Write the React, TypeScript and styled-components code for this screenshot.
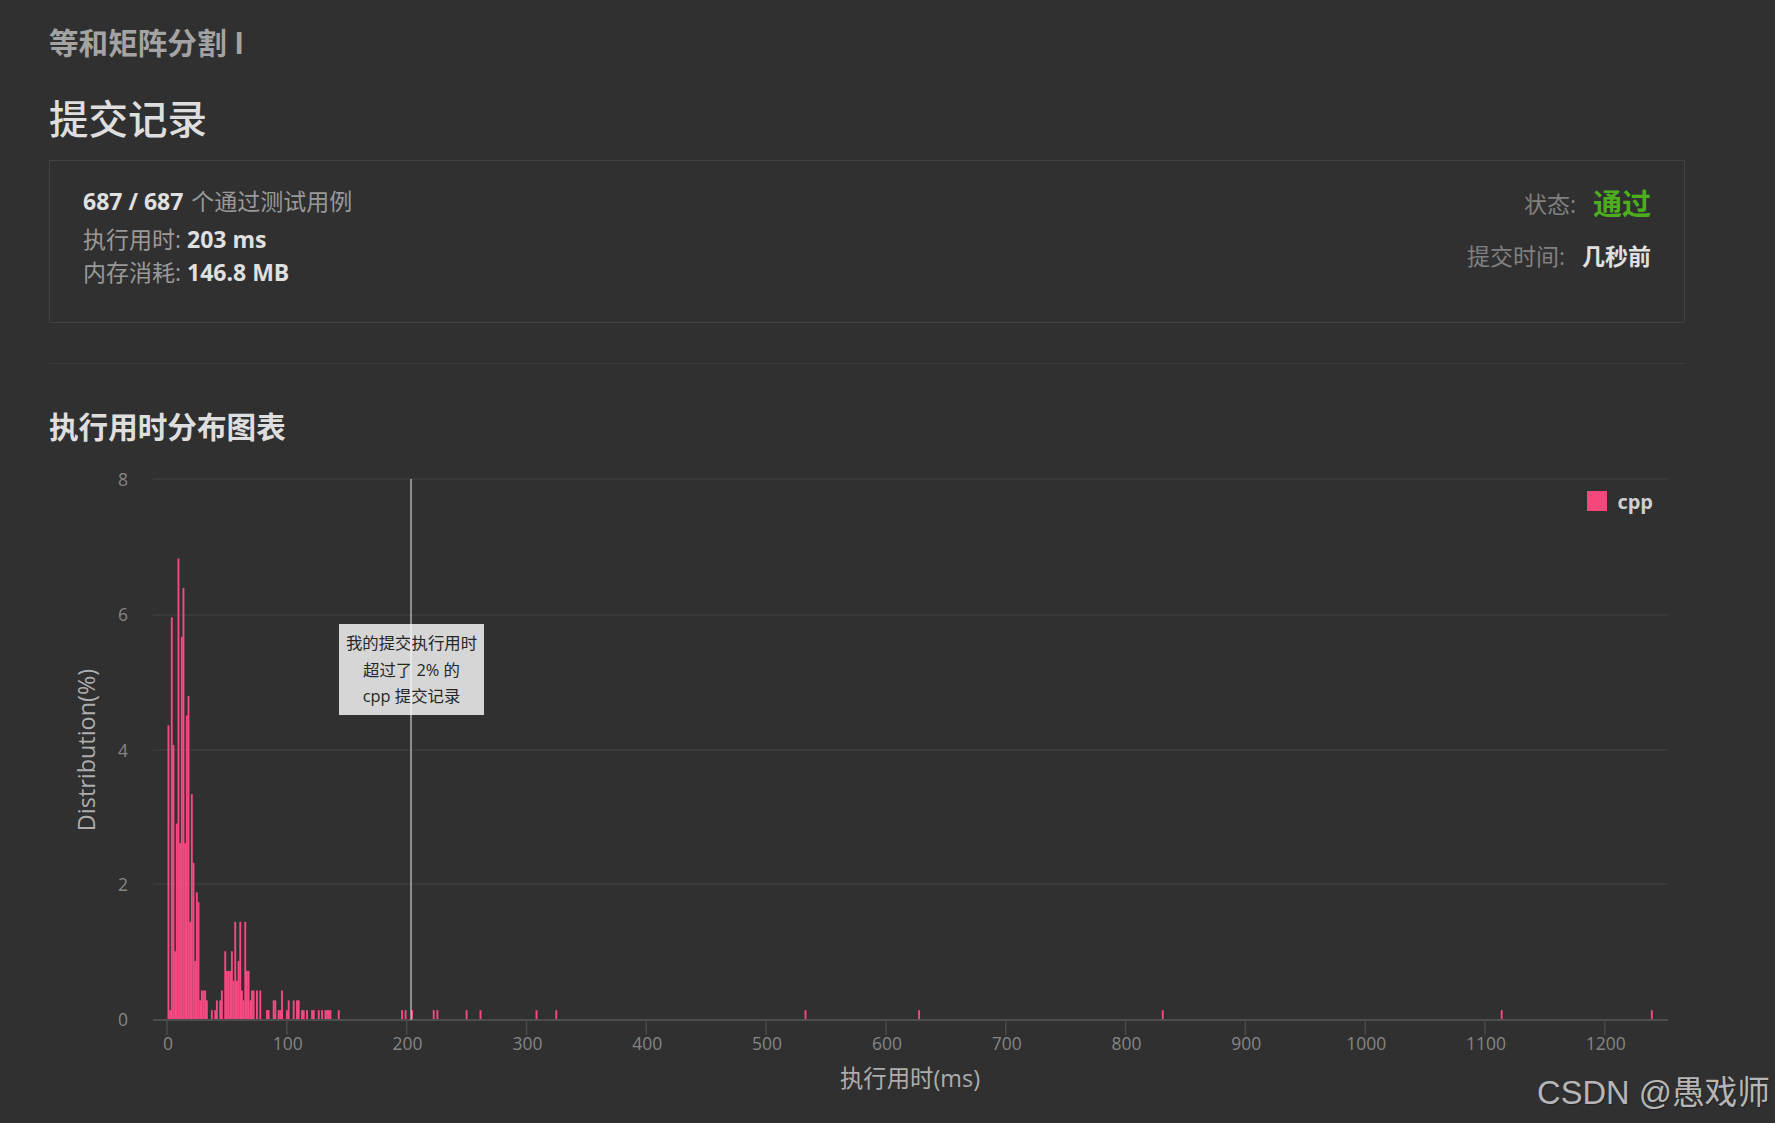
import React from 'react';
import styled, { createGlobalStyle } from 'styled-components';

const FONT = `"Open Sans", "Noto Sans CJK SC", sans-serif`;

const GlobalStyle = createGlobalStyle`
  html, body {
    margin: 0;
    padding: 0;
    background: #303030;
  }
`;

const Page = styled.div`
  position: relative;
  box-sizing: border-box;
  width: 1775px;
  height: 1123px;
  overflow: hidden;
  padding: 23px 90px 0 49px;
  background: #303030;
  font-family: ${FONT};
`;

const ProblemTitle = styled.div`
  height: 40px;
  line-height: 40px;
  font-size: 29.6px;
  font-weight: 700;
  color: #a3a3a3;
`;

const Heading = styled.h1`
  margin: 31px 0 16px;
  height: 50px;
  line-height: 50px;
  font-size: 39.5px;
  font-weight: 500;
  color: #dedede;
`;

const ResultCard = styled.div`
  box-sizing: border-box;
  height: 163px;
  padding: 23px 33px 0 33px;
  border: 1px solid #414141;
  display: flex;
  justify-content: space-between;
`;

const Stats = styled.div`
  margin-top: 1px;
  display: flex;
  flex-direction: column;
`;

const StatRow = styled.div<{ $mt?: number }>`
  height: 33px;
  line-height: 33px;
  margin-top: ${(p) => p.$mt || 0}px;
  font-size: 23px;
  color: #999;
  white-space: pre;
`;

const Strong = styled.strong<{ $mr?: number }>`
  margin-right: ${(p) => p.$mr || 0}px;
  font-weight: 700;
  color: #e0e0e0;
`;

const Meta = styled.div`
  display: flex;
  flex-direction: column;
  align-items: flex-end;
  gap: 18px;
`;

const MetaRow = styled.div`
  display: flex;
  align-items: center;
  gap: 17px;
  height: 35px;
  font-size: 23px;
  color: #808080;
`;

const MetaLabel = styled.span<{ $dy?: number }>`
  transform: translateY(${(p) => p.$dy || 0}px);
`;

const PassText = styled.span`
  font-size: 29px;
  font-weight: 700;
  color: #4cae1f;
`;

const Divider = styled.hr`
  margin: 40px 0 43px;
  border: 0;
  height: 1px;
  background: #3b3b3b;
`;

const SectionTitle = styled.h2`
  margin: 0;
  height: 40px;
  line-height: 40px;
  font-size: 29.6px;
  font-weight: 700;
  color: #dedede;
`;

const ChartWrap = styled.div`
  position: relative;
  width: 1635px;
  height: 676px;
`;

const ChartSvg = styled.svg`
  display: block;
  width: 1635px;
  height: 676px;
`;

const TickLabel = styled.text`
  font-family: ${FONT};
  font-size: 17.5px;
  fill: #858585;
`;

const AxisName = styled.text`
  font-family: ${FONT};
  font-size: 23.4px;
  fill: #adadad;
`;

const Legend = styled.div`
  position: absolute;
  top: 44px;
  right: 31px;
  display: flex;
  align-items: center;
  gap: 10px;
  height: 20px;
  font-size: 20px;
  font-weight: 700;
  color: #cfcfcf;
`;

const LegendSwatch = styled.span`
  width: 20px;
  height: 20px;
  background: #f4487d;
`;

const Tooltip = styled.div`
  position: absolute;
  left: 290px;
  top: 177px;
  box-sizing: border-box;
  width: 145px;
  height: 91px;
  padding-top: 6px;
  background: #d6d6d6;
  color: #262626;
  font-size: 16.4px;
  line-height: 26.6px;
  text-align: center;
`;

const CursorLine = styled.div`
  position: absolute;
  left: 361px;
  top: 32px;
  width: 2px;
  height: 541px;
  background: rgba(255, 255, 255, 0.45);
`;

const Watermark = styled.div`
  position: absolute;
  right: 5px;
  top: 1072px;
  line-height: 42px;
  font-family: "Liberation Sans", "Noto Sans CJK SC", sans-serif;
  font-size: 32.7px;
  color: #b6b6b6;
  text-shadow: 1px 1px 1px rgba(0, 0, 0, 0.3);
  white-space: nowrap;
`;

const BASE_Y = 1020;
const UNIT = 9.82;
const BAR_W = 1.67;

// histogram levels by bin index, read off the reference
const DENSE: Record<number, number> = {
  0: 30, 1: 1, 2: 41, 3: 28, 4: 7, 5: 20, 6: 47, 7: 18, 8: 39, 9: 44, 10: 18, 11: 31, 12: 33,
  13: 10, 14: 23, 15: 16, 16: 6, 17: 13, 18: 12, 19: 2, 20: 3, 21: 3, 22: 3, 23: 2,
  26: 1, 28: 1, 29: 2, 31: 2, 32: 3, 34: 7, 35: 5, 36: 5, 37: 5, 38: 7, 39: 4, 40: 10, 41: 4,
  42: 6, 43: 10, 44: 3, 45: 2, 46: 10, 47: 5, 48: 5, 49: 2, 50: 3, 51: 3, 53: 3, 55: 3,
  59: 1, 60: 1, 63: 2, 64: 2, 66: 1, 67: 1, 68: 3, 71: 1, 72: 2, 75: 2, 77: 2, 78: 2,
  80: 1, 81: 1, 83: 1, 86: 1, 87: 1, 90: 1, 92: 1, 94: 1, 95: 1, 96: 1, 97: 1, 102: 1,
};

const SPARSE_X = [402, 405.5, 412, 433.6, 437.3, 466.5, 480.4, 536.4, 556.2, 805.4, 919, 1162.6, 1501.6, 1651.7];

const bars = [
  ...Object.entries(DENSE).map(([k, level]) => ({ x: 167.5 + Number(k) * BAR_W, level })),
  ...SPARSE_X.map((x) => ({ x: x - BAR_W / 2, level: 1 })),
];

const X_TICKS = [0, 100, 200, 300, 400, 500, 600, 700, 800, 900, 1000, 1100, 1200];
const GRID_Y = [479, 615, 750, 884];
const Y_LABELS = [
  { label: '8', y: 486 },
  { label: '6', y: 621 },
  { label: '4', y: 757 },
  { label: '2', y: 891 },
  { label: '0', y: 1026 },
];

const xOf = (v: number) => 167 + v * 1.1982;

const DistributionChart: React.FC = () => (
  <ChartWrap>
    <ChartSvg viewBox="49 447 1635 676">
      {GRID_Y.map((y) => (
        <line key={y} x1={153} x2={1668} y1={y} y2={y} stroke="#3c3c3c" strokeWidth={1.5} />
      ))}
      {Y_LABELS.map((t) => (
        <TickLabel key={t.label} x={128} y={t.y} textAnchor="end">
          {t.label}
        </TickLabel>
      ))}
      {bars.map((b, i) => (
        <rect key={i} x={b.x} y={BASE_Y - b.level * UNIT} width={BAR_W + 0.2} height={b.level * UNIT} fill="#f74a82" />
      ))}
      <line x1={153} x2={1668} y1={BASE_Y} y2={BASE_Y} stroke="#4d4d4d" strokeWidth={2} />
      {X_TICKS.map((v) => (
        <g key={v}>
          <line x1={xOf(v)} x2={xOf(v)} y1={BASE_Y} y2={1035} stroke="#4a4a4a" strokeWidth={1.5} />
          <TickLabel x={xOf(v) + 1} y={1050} textAnchor="middle">
            {v}
          </TickLabel>
        </g>
      ))}
      <AxisName x={910} y={1087} textAnchor="middle">
        执行用时(ms)
      </AxisName>
      <AxisName x={0} y={0} textAnchor="middle" transform="translate(95 750) rotate(-90)">
        Distribution(%)
      </AxisName>
    </ChartSvg>
    <Legend>
      <LegendSwatch />
      cpp
    </Legend>
    <Tooltip>
      我的提交执行用时
      <br />
      超过了 2% 的
      <br />
      cpp 提交记录
    </Tooltip>
    <CursorLine />
  </ChartWrap>
);

const App: React.FC = () => (
  <Page>
    <GlobalStyle />
    <ProblemTitle>等和矩阵分割 I</ProblemTitle>
    <Heading>提交记录</Heading>
    <ResultCard>
      <Stats>
        <StatRow>
          <Strong $mr={2}>687 / 687</Strong> 个通过测试用例
        </StatRow>
        <StatRow $mt={5}>
          执行用时: <Strong>203 ms</Strong>
        </StatRow>
        <StatRow>
          内存消耗: <Strong>146.8 MB</Strong>
        </StatRow>
      </Stats>
      <Meta>
        <MetaRow>
          <MetaLabel $dy={1}>状态:</MetaLabel>
          <PassText>通过</PassText>
        </MetaRow>
        <MetaRow>
          <MetaLabel>提交时间:</MetaLabel>
          <Strong>几秒前</Strong>
        </MetaRow>
      </Meta>
    </ResultCard>
    <Divider />
    <SectionTitle>执行用时分布图表</SectionTitle>
    <DistributionChart />
    <Watermark>CSDN @愚戏师</Watermark>
  </Page>
);

export default App;
